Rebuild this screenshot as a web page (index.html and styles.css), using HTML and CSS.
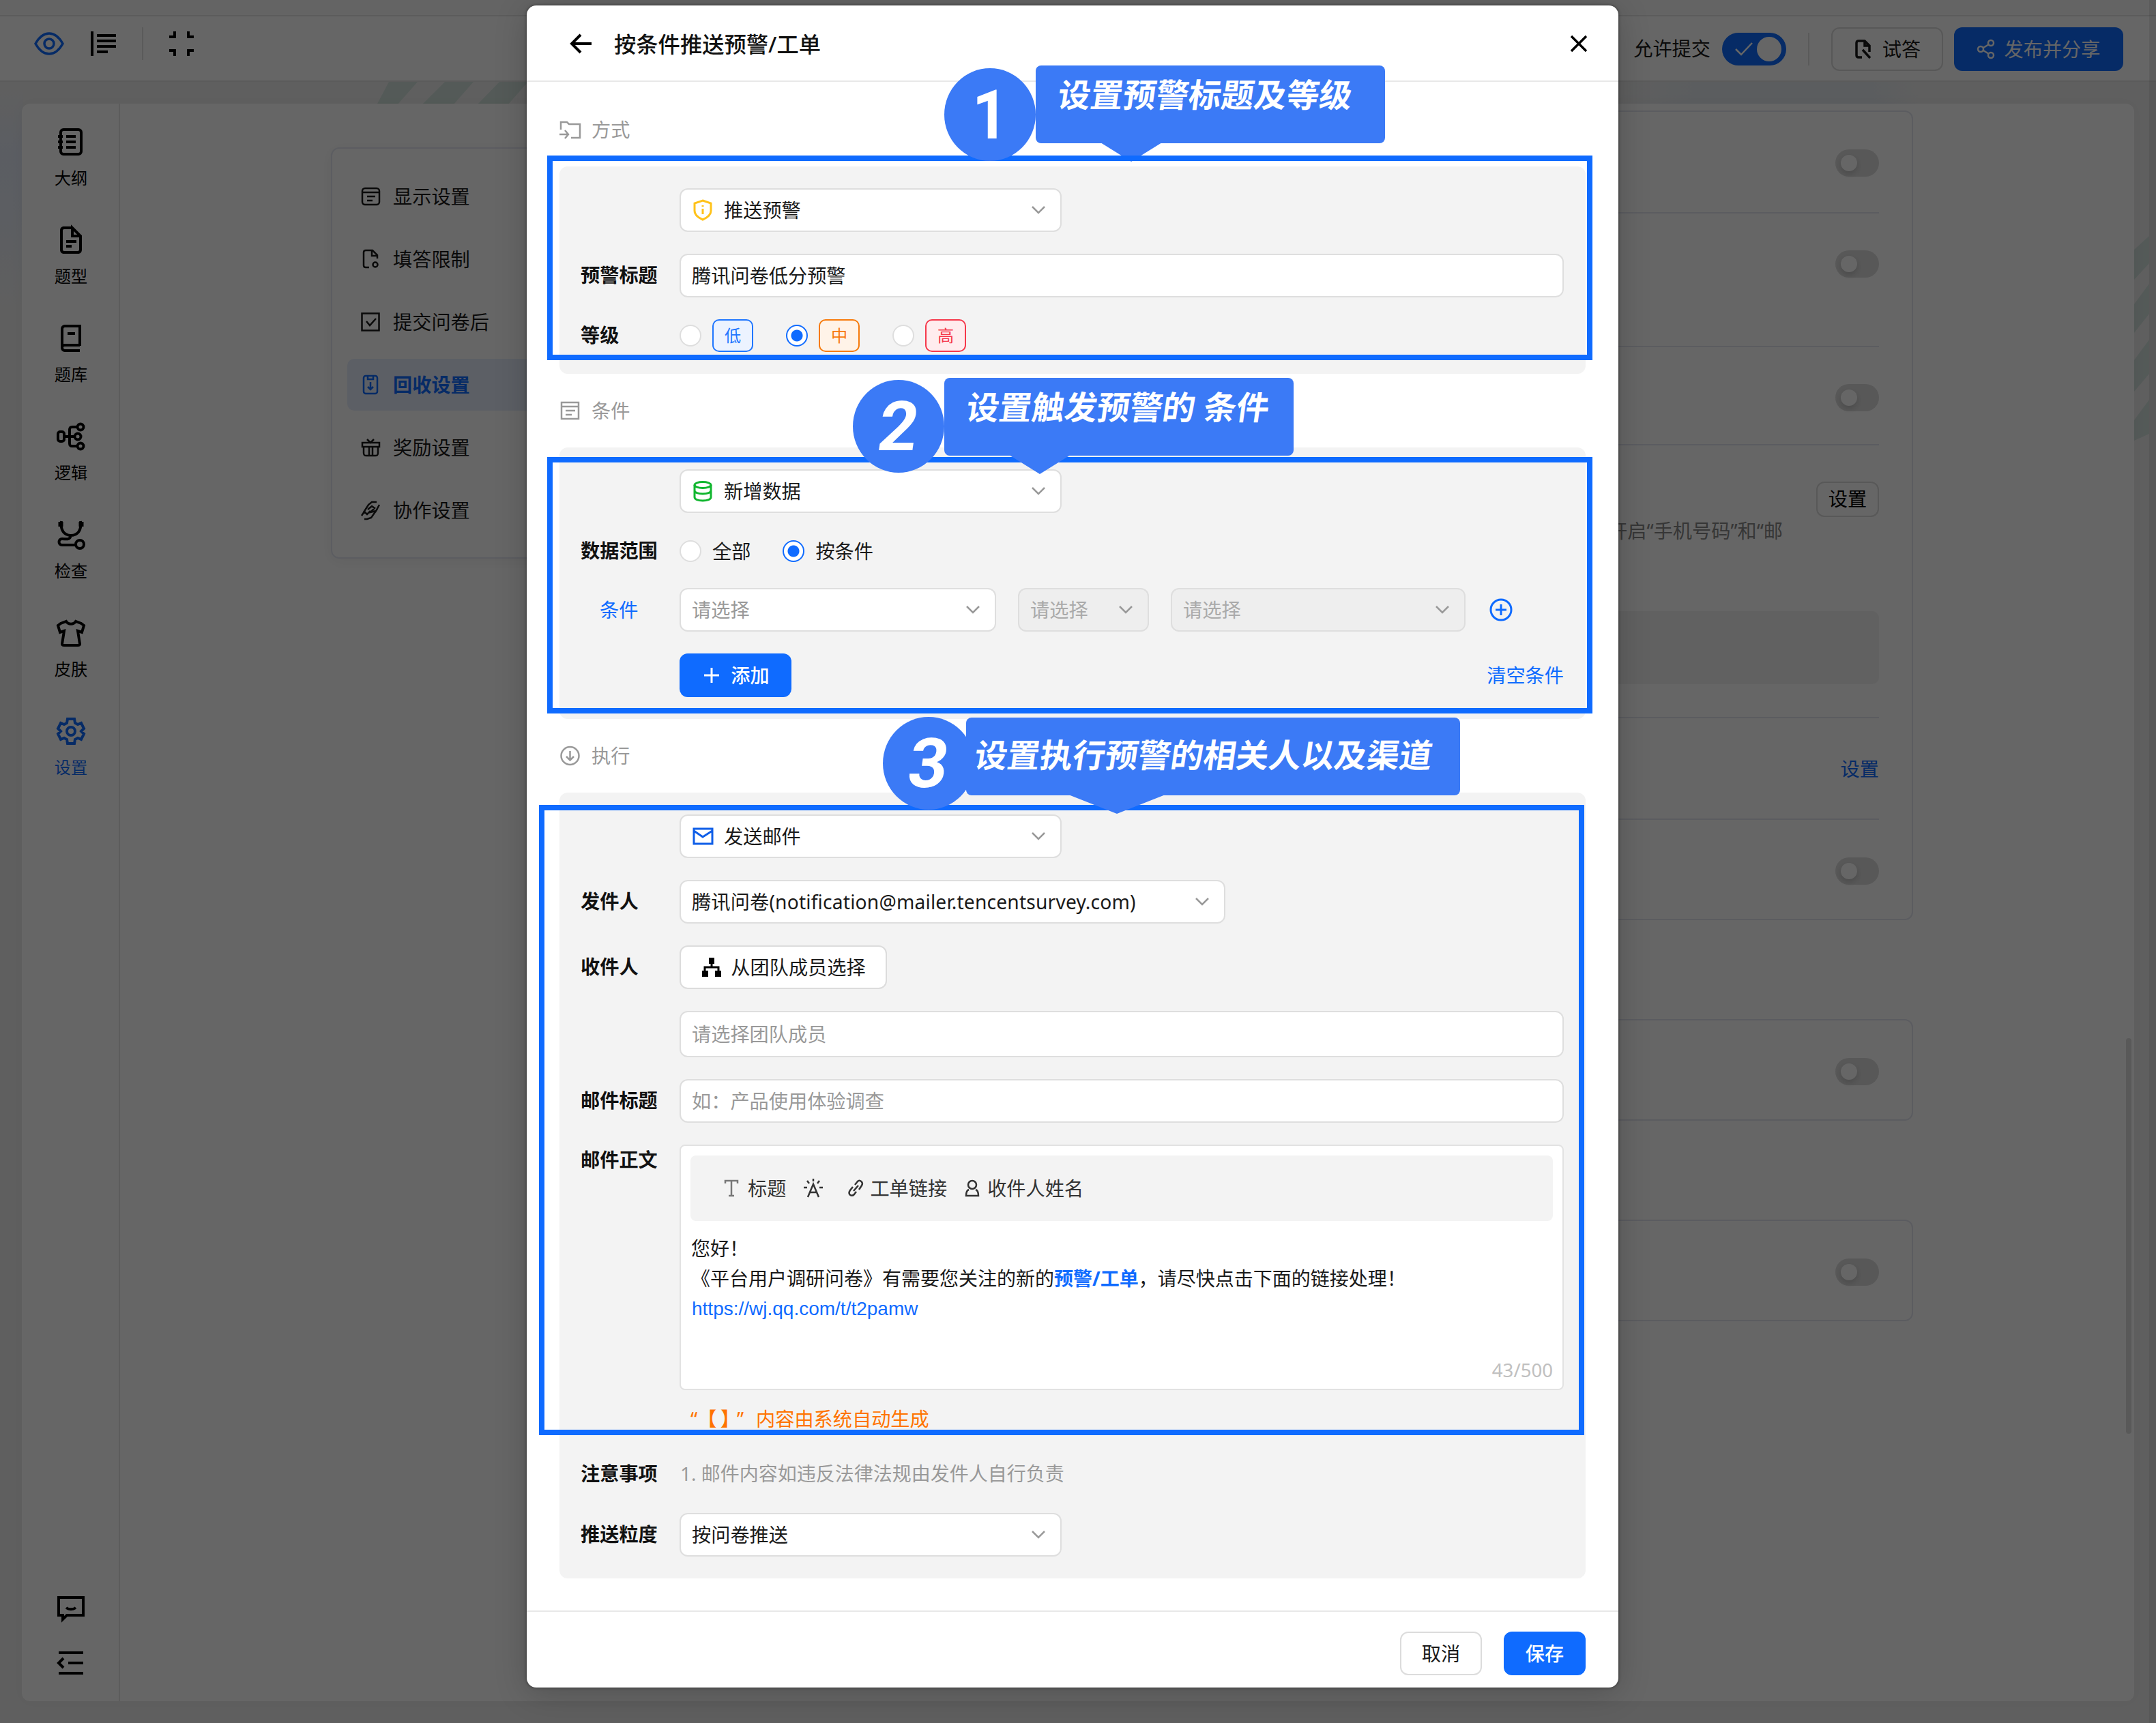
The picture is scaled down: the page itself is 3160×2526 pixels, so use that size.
FILE: index.html
```html
<!DOCTYPE html>
<html lang="zh-CN">
<head>
    <meta charset="UTF-8">
    <meta name="viewport" content="width=device-width, initial-scale=1.0">
    <title>按条件推送预警/工单</title>
    <link rel="stylesheet" href="styles.css">
</head>
<body>
    <div class="page">
        <div class="top-strip"></div>
        <header class="toolbar">
            <div class="toolbar-left">
                <svg class="icon-eye" viewBox="0 0 44 34"><path d="M2 17C7 8 13 2 22 2s15 6 20 15c-5 9-11 15-20 15S7 26 2 17z"/><circle cx="22" cy="17" r="7"/></svg>
                <svg class="icon-outline" viewBox="0 0 38 36"><path d="M2 0v36M9 6h28M9 14h28M9 22h28M9 30h16"/></svg>
                <span class="line"></span>
                <svg class="icon-shrink" viewBox="0 0 36 36"><path d="M0 8h8V0M28 0v8h8M0 28h8v8M28 36v-8h8"/></svg>
            </div>
            <div class="toolbar-right">
                <span class="allow">允许提交</span>
                <span class="switch-on"><svg viewBox="0 0 26 20"><path d="M1 10l8 8L25 1"/></svg><i></i></span>
                <span class="line"></span>
                <button class="btn btn-try"><svg viewBox="0 0 26 28"><path d="M12 26H7c-2 0-3-1-3-3V5c0-2 1-3 3-3h9l7 7v9M16 2v7h7M13 15l11 12"/></svg>试答</button>
                <button class="btn btn-publish"><svg viewBox="0 0 26 28"><circle cx="20" cy="5" r="4"/><circle cx="5" cy="14" r="4"/><circle cx="20" cy="23" r="4"/><path d="M9 12l8-5M9 16l8 5"/></svg>发布并分享</button>
            </div>
        </header>

        <div class="backdrop">
            <div class="glow-left"></div>
            <div class="glow-right"></div>
            <svg class="stripes-top" viewBox="0 0 230 34"><path d="M18 0h42L30 34H0zM100 0h42l-30 34H66zM180 0h42l-30 34h-45z"/></svg>
            <svg class="stripes-right" viewBox="0 0 22 400"><path d="M0 20L22 0v40L0 64zM0 100l22-30v44L0 142zM0 182l22-30v50L0 228zM0 270l22-30v50L0 300z"/></svg>
            <div class="workspace">
                <nav class="sidebar">
                    <a><svg viewBox="0 0 40 40"><rect x="5" y="2" width="30" height="36" rx="4"/><path d="M13 12h14M13 20h14M13 28h14M1 12h7M1 20h7M1 28h7"/></svg>大纲</a>
                    <a><svg viewBox="0 0 40 40"><path d="M22 2H9a4 4 0 0 0-3 4v28a4 4 0 0 0 3 4h22a4 4 0 0 0 3-4V14L22 2v12h12M13 22h15M13 29h8"/></svg>题型</a>
                    <a><svg viewBox="0 0 40 40"><path d="M33 31V2H11a4 4 0 0 0-4 4v28a4 4 0 0 0 4 4h22M7 33c0-2 2-3 4-3h22M15 13h11"/></svg>题库</a>
                    <a><svg viewBox="0 0 40 40"><rect x="1" y="13" width="9" height="14" rx="3"/><circle cx="34" cy="6" r="4.500"/><circle cx="30" cy="20" r="4.500"/><circle cx="34" cy="34" r="4.500"/><path d="M10 20h15M29 6h-7c-3 0-4 1-4 4v20c0 3 1 4 4 4h7"/></svg>逻辑</a>
                    <a><svg viewBox="0 0 40 40"><path d="M6 0c-2 13 4 21 14 21S36 13 34 0M20 21c-2 7-6 5-13 5-6 0-6 9 0 9h19"/><circle cx="33" cy="34" r="6"/><path class="thick" d="M5 1v7M35 1v7"/></svg>检查</a>
                    <a><svg viewBox="0 0 40 40"><path d="M13 3c3 5 11 5 14 0l8 3 4 3-3 10-6-2 3 19c0 2-1 2-3 2H10c-2 0-3 0-3-2l3-19-6 2L1 9l4-3z"/></svg>皮肤</a>
                    <a class="active"><svg viewBox="0 0 40 40"><path d="M15 2h10l1 6 4 2 5-2 4 8-4 4 4 4-4 8-5-2-4 2-1 6H15l-1-6-4-2-5 2-4-8 4-4-4-4 4-8 5 2 4-2z"/><circle cx="20" cy="20" r="6"/></svg>设置</a>
                    <div class="sidebar-foot">
                        <svg viewBox="0 0 40 40"><path d="M2 5h36v26H14l-6 6v-6H2zM13 20c4 3 10 3 14 0"/></svg>
                        <svg viewBox="0 0 40 40"><path d="M2 5h36M16 20h22M2 35h36M9 13l-7 7 7 7"/></svg>
                    </div>
                </nav>
                <ul class="menu">
                    <li><svg viewBox="0 0 28 28"><rect x="2" y="2" width="25" height="24" rx="4"/><path d="M2 8h25M9 14h12M9 20h8"/></svg>显示设置</li>
                    <li><svg viewBox="0 0 28 28"><path d="M12 26H7c-2 0-3-1-3-3V4c0-2 1-3 3-3h10l7 7v5M16 2v7h7"/><circle cx="21" cy="22" r="3.500"/></svg>填答限制</li>
                    <li><svg viewBox="0 0 28 28"><rect x="1.500" y="1.500" width="25" height="25"/><path d="M8 13l5 6 9-10"/></svg>提交问卷后</li>
                    <li class="active"><svg viewBox="0 0 28 28"><rect x="4" y="1" width="20" height="26" rx="3"/><path d="M10 2v4h8V2M14 10v11M10 17l4 4 4-4"/></svg>回收设置</li>
                    <li><svg viewBox="0 0 28 28"><path d="M2 7h25v6H2zM4 13v9c0 3 1 4 4 4h13c3 0 4-1 4-4v-9M12 13v13M17 13v13M9 2l5 5 5-5"/></svg>奖励设置</li>
                    <li><svg viewBox="0 0 28 28"><path d="M4 17l7-11 5-4h7M27 6l-6 11M10 13l6-5 4 3-6 6 8-2-7 10-6 2H5M1 22l4-6 4 4 5-5"/></svg>协作设置</li>
                </ul>
                <div class="cards">
                    <section class="card">
                        <div class="card-row"><i class="switch"></i></div>
                        <div class="card-row row-tall"><i class="switch"></i></div>
                        <div class="card-row row-mid"><i class="switch"></i></div>
                        <div class="card-row row-set">
                            <span class="mini-btn">设置</span>
                            <p>开启“手机号码”和“邮</p>
                            <div class="grey-box"></div>
                        </div>
                        <div class="card-row row-link"><a>设置</a></div>
                        <div class="card-row"><i class="switch"></i></div>
                    </section>
                    <section class="card card-two"><div class="card-row"><i class="switch"></i></div></section>
                    <section class="card card-three"><div class="card-row"><i class="switch"></i></div></section>
                </div>
                <div class="scroll-thumb"></div>
            </div>
        </div>
        <div class="page-scroll"></div>
    </div>

    <div class="mask"></div>

    <div class="modal">
        <header class="modal-head">
            <svg class="icon-back" viewBox="0 0 32 28"><path d="M31 14H3M15 1L2 14l13 13"/></svg>
            <h1>按条件推送预警/工单</h1>
            <svg class="icon-close" viewBox="0 0 24 24"><path d="M1 1l22 22M23 1L1 23"/></svg>
        </header>

        <div class="modal-body">
            <h2><svg viewBox="0 0 32 28"><path d="M2 14V3h9l3 3h16v20H17M0 21h12M8 15l5 6-5 6"/></svg>方式</h2>
            <div class="panel">
                <div class="row">
                    <label></label>
                    <div class="select w-560">
                        <svg class="yellow" viewBox="0 0 30 32"><path d="M15 2l12 4v11c0 6-5 10-12 13C8 27 3 23 3 17V6zM15 14v8M15 9v2"/></svg>推送预警
                        <svg class="arrow" viewBox="0 0 20 12"><path d="M1 1l9 9 9-9"/></svg>
                    </div>
                </div>
                <div class="row">
                    <label>预警标题</label>
                    <div class="input">腾讯问卷低分预警</div>
                </div>
                <div class="row row-level">
                    <label>等级</label>
                    <div class="radios">
                        <i class="radio"></i><span class="tag blue">低</span>
                        <i class="radio checked"></i><span class="tag orange">中</span>
                        <i class="radio"></i><span class="tag red">高</span>
                    </div>
                </div>
            </div>

            <h2><svg viewBox="0 0 32 28"><path d="M3 2h25v24H3zM3 8h25M9 14h14M9 20h9"/></svg>条件</h2>
            <div class="panel">
                <div class="row">
                    <label></label>
                    <div class="select w-560">
                        <svg class="green" viewBox="0 0 30 32"><ellipse cx="15" cy="7" rx="12" ry="4.500"/><path d="M3 7v18c0 3 5 5 12 5s12-2 12-5V7M3 15c0 3 5 5 12 5s12-2 12-5"/></svg>新增数据
                        <svg class="arrow" viewBox="0 0 20 12"><path d="M1 1l9 9 9-9"/></svg>
                    </div>
                </div>
                <div class="row row-range">
                    <label>数据范围</label>
                    <div class="radios">
                        <i class="radio"></i><span class="radio-text">全部</span>
                        <i class="radio checked"></i><span class="radio-text">按条件</span>
                    </div>
                </div>
                <div class="row row-cond">
                    <label class="link">条件</label>
                    <div class="conds">
                        <div class="select placeholder w-464">请选择<svg class="arrow" viewBox="0 0 20 12"><path d="M1 1l9 9 9-9"/></svg></div>
                        <div class="select placeholder disabled w-192">请选择<svg class="arrow" viewBox="0 0 20 12"><path d="M1 1l9 9 9-9"/></svg></div>
                        <div class="select placeholder disabled w-432">请选择<svg class="arrow" viewBox="0 0 20 12"><path d="M1 1l9 9 9-9"/></svg></div>
                        <svg class="add-circle" viewBox="0 0 34 34"><circle cx="17" cy="17" r="15"/><path d="M17 9v16M9 17h16"/></svg>
                    </div>
                </div>
                <div class="row">
                    <label></label>
                    <div class="add-line">
                        <button class="btn primary btn-add"><svg viewBox="0 0 22 22"><path d="M11 0v22M0 11h22"/></svg>添加</button>
                        <a class="link">清空条件</a>
                    </div>
                </div>
            </div>

            <h2><svg viewBox="0 0 32 28"><circle cx="15.500" cy="14" r="13"/><path d="M15.500 7v13M10 15l5.500 5.500L21 15"/></svg>执行</h2>
            <div class="panel">
                <div class="row">
                    <label></label>
                    <div class="select w-560">
                        <svg class="mail" viewBox="0 0 30 32"><path d="M2 5h27v22H2zM2 8l13 9L29 8"/></svg>发送邮件
                        <svg class="arrow" viewBox="0 0 20 12"><path d="M1 1l9 9 9-9"/></svg>
                    </div>
                </div>
                <div class="row">
                    <label>发件人</label>
                    <div class="select w-800"><span class="sender">腾讯问卷(notification@mailer.tencentsurvey.com)</span><svg class="arrow" viewBox="0 0 20 12"><path d="M1 1l9 9 9-9"/></svg></div>
                </div>
                <div class="row">
                    <label>收件人</label>
                    <button class="btn btn-team"><svg viewBox="0 0 28 28"><path class="solid" d="M10 0h8v9h-8zM0 19h9v9H0zM19 19h9v9h-9z"/><path d="M14 8v6M4 20v-6h20v6"/></svg>从团队成员选择</button>
                </div>
                <div class="row">
                    <label></label>
                    <div class="input placeholder input-tall">请选择团队成员</div>
                </div>
                <div class="row">
                    <label>邮件标题</label>
                    <div class="input placeholder">如：产品使用体验调查</div>
                </div>
                <div class="row row-top">
                    <label>邮件正文</label>
                    <div class="editor">
                        <div class="editor-bar">
                            <svg class="t-icon" viewBox="0 0 22 26"><path d="M2 6V2h18v4M11 2v22M7 24h8"/></svg><span class="bar-title">标题</span>
                            <svg class="a-icon" viewBox="0 0 28 28"><path d="M6 27l8-19 8 19M9 20h10M14 0v4M5 3l3 4M23 3l-3 4M0 13h5M23 13h5"/></svg>
                            <svg class="l-icon" viewBox="0 0 24 26"><path d="M9 17l7-8M11 8l4-5c3-3 9 1 6 6l-4 6M13 18l-3 4c-4 4-10 0-6-6l4-5"/></svg><span class="bar-link">工单链接</span>
                            <svg class="u-icon" viewBox="0 0 22 26"><circle cx="11" cy="8" r="6"/><path d="M6 15c-3 1-4 4-4 9h18c0-5-1-8-4-9"/></svg><span>收件人姓名</span>
                        </div>
                        <div class="editor-text">
                            <p>您好！</p>
                            <p>《平台用户调研问卷》有需要您关注的新的<b>预警/工单</b>，请尽快点击下面的链接处理！</p>
                            <p class="url">https://wj.qq.com/t/t2pamw</p>
                        </div>
                        <div class="count">43/500</div>
                    </div>
                </div>
                <div class="hint"><span class="q1">“</span><span class="b1">【</span><span class="b2">】</span><span class="q2">”</span>内容由系统自动生成</div>
                <div class="row row-note">
                    <label>注意事项</label>
                    <span class="note">1. 邮件内容如违反法律法规由发件人自行负责</span>
                </div>
                <div class="row row-push">
                    <label>推送粒度</label>
                    <div class="select w-560">按问卷推送<svg class="arrow" viewBox="0 0 20 12"><path d="M1 1l9 9 9-9"/></svg></div>
                </div>
            </div>
        </div>

        <footer class="modal-foot">
            <button class="btn btn-cancel">取消</button>
            <button class="btn primary btn-save">保存</button>
        </footer>
    </div>

    <!-- 步骤标注 -->
    <svg class="pointer pointer-1" viewBox="0 0 90 28"><path d="M0 0h90L45 28z"/></svg>
    <div class="frame frame-1"></div>
    <div class="frame frame-2"></div>
    <div class="frame frame-3"></div>
    <svg class="pointer pointer-2" viewBox="0 0 90 28"><path d="M0 0h90L45 28z"/></svg>
    <svg class="pointer pointer-3" viewBox="0 0 142 28" preserveAspectRatio="none"><path d="M0 0h142L71 28z"/></svg>
    <div class="step step-1"><span>1</span></div>
    <div class="tip tip-1"><span>设置预警标题及等级</span></div>
    <div class="step step-2"><span>2</span></div>
    <div class="tip tip-2"><span>设置触发预警的 条件</span></div>
    <div class="step step-3"><span>3</span></div>
    <div class="tip tip-3"><span>设置执行预警的相关人以及渠道</span></div>
</body>
</html>
```

FILE: styles.css
```css
* {
    box-sizing: border-box;
}
body {
    margin: 0;
    width: 3160px;
    height: 2526px;
    position: relative;
    overflow: hidden;
    font-family: "Noto Sans", "Noto Sans CJK SC", sans-serif;
    font-size: 28.2px;
    line-height: 44px;
    color: #1a1a1a;
}
h1, h2, p, ul {
    margin: 0;
    padding: 0;
    list-style: none;
}
svg {
    fill: none;
    stroke: currentColor;
    stroke-width: 2.5;
    flex: none;
    overflow: visible;
}
.btn {
    height: 64px;
    border: 2px solid #dcdcdc;
    border-radius: 12px;
    background: #fff;
    color: #1a1a1a;
    font: inherit;
    padding: 0;
    display: flex;
    align-items: center;
    justify-content: center;
}
.link {
    color: #0f6bff;
}

/* 背景页面 */
.page {
    height: 2526px;
    display: flex;
    flex-direction: column;
    background: #eee;
    position: relative;
}
.top-strip {
    height: 24px;
    background: #fafafa;
    border-bottom: 2px solid #e6e6e6;
}
.toolbar {
    height: 96px;
    background: #fff;
    border-bottom: 2px solid #e4e4e4;
    display: flex;
    justify-content: space-between;
    padding: 16px 48px 0 50px;
}
.toolbar-left {
    display: flex;
    align-items: center;
    height: 48px;
    color: #000;
}
.icon-eye {
    width: 44px;
    height: 34px;
    color: #0f6bff;
    stroke-width: 3.5;
}
.icon-outline {
    width: 38px;
    height: 36px;
    margin-left: 39px;
    stroke-width: 4;
}
.line {
    width: 2px;
    height: 48px;
    background: #e0e0e0;
}
.toolbar-left .line {
    margin: 0 38px 0 37px;
}
.icon-shrink {
    width: 36px;
    height: 36px;
    stroke-width: 4;
}
.toolbar-right {
    display: flex;
    align-items: center;
    height: 64px;
}
.allow {
    padding-bottom: 2px;
}
.switch-on {
    width: 94px;
    height: 48px;
    border-radius: 24px;
    background: #0f6bff;
    margin: 0 32px 0 17px;
    padding: 6px 7px 6px 19px;
    display: flex;
    align-items: center;
    justify-content: space-between;
    color: #fff;
}
.switch-on svg {
    width: 26px;
    height: 20px;
}
.switch-on i {
    width: 36px;
    height: 36px;
    border-radius: 50%;
    background: #fff;
}
.btn-try {
    width: 164px;
    margin: 0 16px 0 32px;
    gap: 16px;
}
.btn-try svg, .btn-publish svg {
    width: 26px;
    height: 28px;
}
.btn-try svg {
    stroke-width: 3.5;
}
.btn-publish {
    width: 248px;
    background: #0f6bff;
    border: 0;
    color: #fff;
    gap: 14px;
}
.backdrop {
    flex: 1;
    padding: 32px 32px 32px;
    position: relative;
}
.glow-left {
    position: absolute;
    left: 0;
    top: 10px;
    width: 34px;
    height: 320px;
    background: linear-gradient(#eee, #e3e9f6 30%, #e6ebf4 60%, #eee);
}
.glow-right {
    position: absolute;
    left: 2372px;
    top: 0;
    width: 440px;
    height: 32px;
    background: linear-gradient(90deg, #eee, #e4e9ee 25%, #e4e9ee 85%, #eee);
}
.stripes-top {
    position: absolute;
    left: 552px;
    top: 0;
    width: 230px;
    height: 34px;
    fill: #d2e2dc;
    stroke: none;
}
.stripes-right {
    position: absolute;
    left: 3128px;
    top: 226px;
    width: 22px;
    height: 400px;
    fill: #d2e0dc;
    stroke: none;
}
.workspace {
    height: 2342px;
    background: #fff;
    border-radius: 12px;
    display: flex;
    position: relative;
    box-shadow: 0 0 20px rgba(0, 0, 0, 0.04);
}
.sidebar {
    width: 144px;
    border-right: 2px solid #e6e6e6;
    display: flex;
    flex-direction: column;
    align-items: center;
    padding: 36px 0 0 2px;
    font-size: 24.2px;
    line-height: 34px;
    color: #000;
}
.sidebar a {
    height: 144px;
    display: flex;
    flex-direction: column;
    align-items: center;
    gap: 16px;
}
.sidebar svg {
    width: 40px;
    height: 40px;
    stroke-width: 4;
}
.sidebar .thick {
    stroke-width: 7;
}
.sidebar .active {
    color: #0f6bff;
}
.sidebar-foot {
    margin-top: auto;
    margin-bottom: 36px;
    display: flex;
    flex-direction: column;
    gap: 41px;
}
.menu {
    width: 400px;
    height: 603px;
    margin: 64px 0 0 309px;
    border: 2px solid #e6e8f2;
    border-radius: 12px;
    padding: 24px 22px;
    box-shadow: 0 4px 20px rgba(0, 0, 0, 0.05);
    flex: none;
}
.menu li {
    height: 76px;
    margin: 8px 0 16px;
    padding-left: 20px;
    display: flex;
    align-items: center;
    gap: 19px;
    border-radius: 10px;
}
.menu svg {
    width: 28px;
    height: 28px;
}
.menu .active {
    background: #e7edfc;
    color: #0f6bff;
    font-weight: 700;
}
.cards {
    margin-top: 10px;
    margin-left: auto;
    margin-right: 324px;
    width: 1800px;
}
.card {
    border: 2px solid #e4e6f0;
    border-radius: 12px;
    padding: 0 48px;
}
.card-two, .card-three {
    margin-top: 145px;
}
.card-row {
    height: 149px;
    padding-top: 55px;
    border-bottom: 2px solid #e4e6f0;
    display: flex;
    flex-direction: column;
    align-items: flex-end;
}
.card-row:last-child {
    height: 145px;
    border-bottom: 0;
}
.row-tall {
    height: 196px;
    padding-top: 54px;
}
.row-mid {
    height: 144px;
    padding-top: 54px;
}
.row-set {
    height: 400px;
    padding-top: 53px;
}
.row-link {
    height: 149px;
    padding-top: 52px;
    color: #0f6bff;
}
.switch {
    width: 64px;
    height: 40px;
    border-radius: 20px;
    background: #dcdcdc;
    padding: 8px;
}
.switch::before {
    content: "";
    display: block;
    width: 24px;
    height: 24px;
    border-radius: 50%;
    background: #fff;
    box-shadow: 0 4px 8px rgba(0, 0, 0, 0.15);
}
.mini-btn {
    border: 2px solid #dcdcdc;
    border-radius: 12px;
    width: 92px;
    height: 52px;
    line-height: 46px;
    text-align: center;
    color: #000;
}
.row-set p {
    color: #888;
    margin: -2px 141px 0 0;
}
.grey-box {
    width: 1600px;
    height: 107px;
    margin-top: 96px;
    border-radius: 10px;
    background: #f2f2f2;
}
.scroll-thumb {
    position: absolute;
    right: 4px;
    top: 1370px;
    width: 8px;
    height: 580px;
    border-radius: 4px;
    background: #dedede;
}
.page-scroll {
    position: absolute;
    right: 0;
    top: 0;
    width: 10px;
    height: 2526px;
    background: rgba(0, 0, 0, 0.08);
}
.mask {
    position: absolute;
    left: 0;
    top: 0;
    width: 3160px;
    height: 2526px;
    background: rgba(0, 0, 0, 0.6);
}

/* 弹窗 */
.modal {
    position: absolute;
    left: 772px;
    top: 8px;
    width: 1600px;
    height: 2466px;
    background: #fff;
    border-radius: 14px;
    box-shadow: 0 8px 48px rgba(0, 0, 0, 0.2), 0 0 4px rgba(0, 0, 0, 0.5);
    display: flex;
    flex-direction: column;
}
.modal-head {
    height: 112px;
    border-bottom: 2px solid #e8e8e8;
    display: flex;
    align-items: center;
    padding: 1px 46px 0 64px;
}
.icon-back {
    width: 32px;
    height: 28px;
    stroke-width: 4;
    color: #000;
}
.modal-head h1 {
    font-size: 32.3px;
    font-weight: 500;
    margin-left: 32px;
    padding-top: 1px;
    color: #111;
}
.icon-close {
    width: 24px;
    height: 24px;
    margin-left: auto;
    stroke-width: 3.5;
    color: #000;
}
.modal-body {
    padding: 16px 48px 0;
    flex: 1;
}
.modal-body h2 {
    margin: 32px 0;
    display: flex;
    align-items: center;
    gap: 15px;
    font-size: 28.2px;
    font-weight: 400;
    color: #999;
}
.modal-body h2 svg {
    width: 32px;
    height: 28px;
}
.panel {
    background: #f3f3f3;
    border-radius: 12px;
    padding: 32px;
}
.row {
    display: flex;
    align-items: center;
    margin-top: 32px;
}
.row:first-child {
    margin-top: 0;
}
.row label {
    width: 144px;
    flex: none;
    font-weight: 700;
    color: #111;
    padding-bottom: 2px;
    margin-left: -1px;
    margin-right: 1px;
}
.row label.link {
    padding: 0 0 0 28px;
    font-weight: 400;
    color: #0f6bff;
}
.input, .select {
    flex: 1;
    height: 64px;
    border: 2px solid #dedede;
    border-radius: 12px;
    background: #fff;
    padding: 0 16px;
    display: flex;
    align-items: center;
}
.select {
    flex: none;
    padding-right: 22px;
}
.select svg:first-child {
    width: 30px;
    height: 32px;
    margin: 0 16px 0 1px;
    stroke-width: 3;
}
.select .arrow, .select .arrow:first-child {
    width: 20px;
    height: 12px;
    margin: 0 0 0 auto;
    color: #999;
    stroke-width: 2.5;
}
.input-tall {
    height: 68px;
}
.placeholder {
    color: #999;
}
.disabled {
    background: #eee;
    color: #aaa;
}
.w-560 { width: 560px; }
.w-800 { width: 800px; }
.w-464 { width: 464px; }
.w-192 { width: 192px; }
.w-432 { width: 432px; }
.yellow { color: #ffc21a; }
.green { color: #11b62f; }
.mail { color: #0f5ee8; }
.sender {
    white-space: nowrap;
    letter-spacing: 0.18px;
}
.row-level, .radios {
    height: 48px;
}
.radios {
    display: flex;
    align-items: center;
}
.radio {
    width: 32px;
    height: 32px;
    border: 2px solid #dedede;
    border-radius: 50%;
    background: #fff;
    margin-right: 16px;
}
.radio.checked {
    border: 2px solid #0f6bff;
    background: radial-gradient(circle, #0f6bff 8px, #fff 9px);
}
.tag {
    width: 60px;
    height: 48px;
    border: 2.5px solid;
    border-radius: 10px;
    font-size: 24.2px;
    text-align: center;
    margin-right: 48px;
}
.blue { color: #1f76ff; background: #ecf3ff; }
.orange { color: #f77a0b; background: #fff3e8; }
.red { color: #f5384b; background: #ffecee; }
.radio-text {
    margin-right: 47px;
}
.row-range {
    height: 48px;
}
.row-cond {
    margin-top: 30px;
}
.conds {
    display: flex;
    align-items: center;
    gap: 32px;
}
.add-circle {
    width: 34px;
    height: 34px;
    margin-left: 3px;
    stroke-width: 3;
    color: #0f6bff;
}
.add-line {
    flex: 1;
    display: flex;
    justify-content: space-between;
    align-items: center;
}
.primary {
    background: #0f6bff;
    border: 0;
    color: #fff;
    font-weight: 500;
}
.btn-add {
    width: 164px;
    gap: 17px;
    padding-left: 4px;
}
.btn-add svg {
    width: 22px;
    height: 22px;
    stroke-width: 3;
}
.btn-team {
    width: 304px;
    gap: 14px;
    padding-left: 2px;
}
.btn-team svg {
    width: 28px;
    height: 28px;
    color: #000;
    stroke-width: 3;
}
.btn-team .solid {
    fill: #000;
    stroke: none;
}
.row-top {
    align-items: flex-start;
}
.editor {
    flex: 1;
    height: 360px;
    background: #fff;
    border: 2px solid #e2e2e2;
    border-radius: 8px;
    padding: 14px;
}
.editor-bar {
    height: 96px;
    background: #f3f3f3;
    border-radius: 8px;
    padding-left: 49px;
    display: flex;
    align-items: center;
    color: #333;
}
.t-icon { width: 22px; height: 26px; margin-right: 13px; color: #777; }
.bar-title { margin-right: 26px; }
.a-icon { width: 28px; height: 28px; margin-right: 36px; }
.l-icon { width: 24px; height: 26px; margin-right: 9px; }
.bar-link { margin-right: 26px; }
.u-icon { width: 22px; height: 26px; margin-right: 11px; }
.editor-text {
    padding: 18px 2px 0 1px;
    height: 196px;
    font-size: 28px;
    white-space: nowrap;
    text-spacing-trim: space-all;
}
.editor-text b {
    color: #0f6bff;
}
.url {
    font-family: "Liberation Sans", sans-serif;
    line-height: 46px;
    padding-left: 1px;
    color: #0f6bff;
}
.count {
    text-align: right;
    color: #c0c0c0;
    font-size: 27.6px;
    line-height: 44px;
}
.hint {
    margin: 20px 0 0 160px;
    color: #ff7300;
    display: flex;
}
.q1 { width: 10px; }
.b1 { width: 34px; font-weight: 700; }
.b2 { width: 24px; font-weight: 700; }
.q2 { width: 28px; }
.row-note {
    margin-top: 37px;
    height: 44px;
}
.note {
    color: #999;
    font-size: 28px;
    padding: 0 0 2px 1px;
}
.row-push {
    margin-top: 35px;
}
.modal-foot {
    height: 113px;
    border-top: 2px solid #e8e8e8;
    display: flex;
    justify-content: flex-end;
    gap: 32px;
    padding: 29px 48px 0;
}
.btn-cancel, .btn-save {
    width: 120px;
}

/* 标注框与气泡 */
.frame {
    position: absolute;
    border: 8px solid #0f6bff;
    width: 1532px;
}
.frame-1 { left: 802px; top: 228px; height: 300px; }
.frame-2 { left: 802px; top: 670px; height: 376px; }
.frame-3 { left: 790px; top: 1180px; height: 924px; }
.step {
    position: absolute;
    width: 134px;
    height: 136px;
    border-radius: 50%;
    background: #3b7af6;
    color: #fff;
    font: 700 101px/138px Roboto, sans-serif;
    text-align: center;
}
.step span, .tip span {
    display: inline-block;
    transform: skewX(-8deg);
}
.step-1 { left: 1384px; top: 100px; }
.step-1 span { transform: scaleX(0.9); }
.step-2 { left: 1250px; top: 557px; }
.step-3 { left: 1294px; top: 1051px; }
.tip {
    position: absolute;
    width: 512px;
    height: 114px;
    border-radius: 8px;
    background: #3b7af6;
    color: #fff;
    font-size: 47.9px;
    font-weight: 700;
    line-height: 86px;
    white-space: nowrap;
}
.tip-1 { left: 1518px; top: 96px; padding-left: 33px; }
.tip-2 { left: 1384px; top: 554px; padding-left: 33px; }
.tip-3 { left: 1416px; top: 1052px; width: 724px; padding-left: 13px; line-height: 110px; }
.pointer {
    position: absolute;
    width: 90px;
    height: 28px;
    fill: #3b7af6;
    stroke: none;
}
.pointer-1 { left: 1613px; top: 209px; }
.pointer-2 { left: 1479px; top: 667px; }
.pointer-3 { left: 1566px; top: 1165px; width: 142px; }
```
